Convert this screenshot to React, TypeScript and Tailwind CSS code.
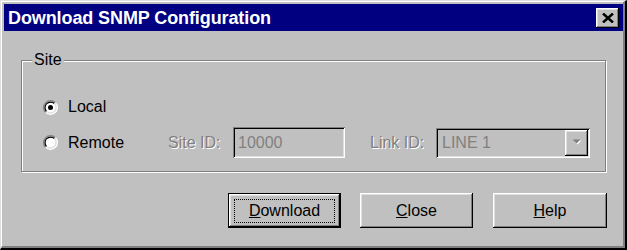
import React from "react";

const raised =
  "shadow-[inset_-1px_-1px_0_#000,inset_1px_1px_0_#fff,inset_-2px_-2px_0_#808080,inset_2px_2px_0_#dfdfdf]";
const sunken =
  "shadow-[inset_1px_1px_0_#808080,inset_-1px_-1px_0_#fff,inset_2px_2px_0_#000,inset_-2px_-2px_0_#dfdfdf]";
const etched = "text-[#808080] [text-shadow:1px_1px_0_#fff]";

function Radio({ checked }: { checked?: boolean }) {
  return (
    <svg width="15" height="15" viewBox="0 0 12 12" className="shrink-0">
      <circle cx="6" cy="6" r="5" fill="#fff" />
      <path d="M2.11 9.89 A5.5 5.5 0 0 1 9.89 2.11" fill="none" stroke="#808080" strokeWidth="1" />
      <path d="M9.89 2.11 A5.5 5.5 0 0 1 2.11 9.89" fill="none" stroke="#fff" strokeWidth="1" />
      <path d="M2.82 9.18 A4.5 4.5 0 0 1 9.18 2.82" fill="none" stroke="#000" strokeWidth="1" />
      <path d="M9.18 2.82 A4.5 4.5 0 0 1 2.82 9.18" fill="none" stroke="#dfdfdf" strokeWidth="1" />
      {checked && <circle cx="6" cy="6" r="2" fill="#000" />}
    </svg>
  );
}

function Button({
  children,
  isDefault,
  className,
}: {
  children: React.ReactNode;
  isDefault?: boolean;
  className?: string;
}) {
  if (isDefault) {
    return (
      <div className={`h-[35px] border border-black flex ${className ?? ""}`}>
        <div className={`flex-1 flex ${raised} p-[5px] pb-[4px]`}>
          <div className="flex-1 flex items-center justify-center border border-dotted border-black text-black">
            {children}
          </div>
        </div>
      </div>
    );
  }
  return (
    <div className={`h-[35px] flex items-center justify-center ${raised} text-black ${className ?? ""}`}>
      {children}
    </div>
  );
}

export default function App() {
  return (
    <div className="w-[627px] h-[250px] bg-[#c0c0c0] font-['Liberation_Sans',Arial,sans-serif] text-[16px] text-black flex border-l border-t border-l-[#dfdfdf] border-t-[#dfdfdf] border-r-2 border-b-2 border-r-black border-b-black">
      <div className="flex-1 flex flex-col border-l border-t border-l-white border-t-white border-r-2 border-b-2 border-r-[#808080] border-b-[#808080] pl-[2px] pt-[2px]">
        {/* Title bar */}
        <div className="h-[27px] bg-[#000080] flex items-center pl-[4px] pr-[4px]">
          <span className="text-white font-bold text-[18px] leading-none tracking-[-0.1px]">
            Download SNMP Configuration
          </span>
          <div className={`ml-auto w-[23px] h-[20px] bg-[#c0c0c0] ${raised} flex items-center justify-center`}>
            <svg width="12" height="10" viewBox="0 0 12 10">
              <path d="M1 0.5 L11 9.5 M11 0.5 L1 9.5" stroke="#000" strokeWidth="2.5" fill="none" />
            </svg>
          </div>
        </div>

        {/* Group box */}
        <div className="ml-[17px] mt-[29px] w-[585px] h-[112px] border border-[#808080] shadow-[inset_1px_1px_0_#fff,1px_1px_0_#fff] flex flex-col">
          <span className="self-start ml-[10px] px-[2px] -mt-[10px] h-[18px] leading-[18px] bg-[#c0c0c0]">
            Site
          </span>
          <div className="mt-[28px] h-[20px] flex items-center pl-[21px]">
            <Radio checked />
            <span className="ml-[10px]">Local</span>
          </div>
          <div className="mt-[10px] h-[31px] flex items-center pl-[21px]">
            <div className="w-[125px] flex items-center">
              <Radio />
              <span className="ml-[10px]">Remote</span>
            </div>
            <span className={`w-[65px] ${etched}`}>Site ID:</span>
            <div className={`w-[112px] h-[31px] ${sunken} flex items-center pl-[5px] text-[#808080]`}>
              10000
            </div>
            <span className={`ml-[25px] w-[66px] ${etched}`}>Link ID:</span>
            <div className={`w-[154px] h-[30px] ${sunken} flex items-center p-[2px] text-[#808080]`}>
              <span className="pl-[4px] flex-1">LINE 1</span>
              <div className={`w-[23px] h-full ${raised} flex items-center justify-center`}>
                <svg width="10" height="7" viewBox="0 0 10 7">
                  <path d="M1.5 1.5 L9.5 1.5 L5.5 5.5 Z" fill="#fff" />
                  <path d="M0.5 0.5 L8.5 0.5 L4.5 4.5 Z" fill="#808080" />
                </svg>
              </div>
            </div>
          </div>
        </div>

        {/* Buttons */}
        <div className="mt-[21px] flex">
          <Button isDefault className="ml-[224px] w-[113px]">
            <span>
              <u>D</u>ownload
            </span>
          </Button>
          <Button className="ml-[19px] w-[113px]">
            <span>
              <u>C</u>lose
            </span>
          </Button>
          <Button className="ml-[20px] w-[114px]">
            <span>
              <u>H</u>elp
            </span>
          </Button>
        </div>
      </div>
    </div>
  );
}
